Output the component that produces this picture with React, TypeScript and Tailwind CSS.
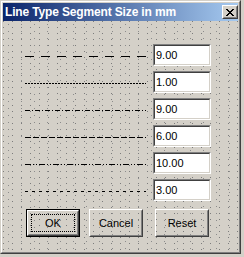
const DOTS =
  'bg-[radial-gradient(circle_at_0.5px_0.5px,#7c7c7c_0.6px,transparent_0.9px),radial-gradient(circle_at_0.5px_0.5px,#8c8c8c_0.6px,transparent_0.9px)] bg-[length:9px_6px,13px_7px] bg-[position:0_0,5px_3px]'

const rows = [
  { dash: '9 7', value: '9.00' },
  { dash: '2 1', value: '1.00' },
  { dash: '5 2 1 2', value: '9.00' },
  { dash: '6 2', value: '6.00' },
  { dash: '6 2 1 2 1 2', value: '10.00' },
  { dash: '3 4', value: '3.00' },
]

const CloseGlyph = () => {
  const px = [
    [0, 0], [1, 0], [6, 0], [7, 0],
    [1, 1], [2, 1], [5, 1], [6, 1],
    [2, 2], [3, 2], [4, 2], [5, 2],
    [3, 3], [4, 3],
    [2, 4], [3, 4], [4, 4], [5, 4],
    [1, 5], [2, 5], [5, 5], [6, 5],
    [0, 6], [1, 6], [6, 6], [7, 6],
  ]
  return (
    <svg width="8" height="7" viewBox="0 0 8 7" shapeRendering="crispEdges">
      {px.map(([x, y]) => (
        <rect key={`${x}-${y}`} x={x} y={y} width="1" height="1" fill="#000" />
      ))}
    </svg>
  )
}

const Field = ({ value }: { value: string }) => (
  <div className="w-[58px] h-[22px] border border-t-[#808080] border-l-[#808080] border-b-white border-r-white">
    <div className="h-full flex items-center pl-px bg-white border border-t-[#404040] border-l-[#404040] border-b-[#d4d0c8] border-r-[#d4d0c8] text-[11px] text-black">
      {value}
    </div>
  </div>
)

const Button = ({ label, isDefault, className }: { label: string; isDefault?: boolean; className?: string }) => (
  <div className={`w-[54px] h-[28px] ${isDefault ? 'border border-black' : ''} ${className ?? ''}`}>
    <div className="h-full border border-t-white border-l-white border-b-[#404040] border-r-[#404040]">
      <div className="h-full border border-t-transparent border-l-transparent border-b-[#808080] border-r-[#808080] flex items-center justify-center p-[2px]">
        <div
          className={`w-full h-full flex items-center justify-center text-[11px] text-black ${
            isDefault ? 'outline outline-1 outline-dotted outline-black -outline-offset-1' : ''
          }`}
        >
          {label}
        </div>
      </div>
    </div>
  </div>
)

export default function App() {
  return (
    <div className="w-[244px] h-[257px] bg-[#d4d0c8] font-['Liberation_Sans',Arial,sans-serif]">
      <div className="w-[241px] h-[254px] border border-t-[#d4d0c8] border-l-[#d4d0c8] border-b-[#404040] border-r-[#404040]">
        <div className="h-full flex flex-col p-px border border-t-white border-l-white border-b-[#808080] border-r-[#808080]">
          <div className="h-[18px] flex items-center justify-between pl-[2px] bg-[linear-gradient(to_right,#0a246a,#a6caf0)]">
            <span className="text-white font-bold text-[12px] tracking-[-0.15px] leading-none">
              Line Type Segment Size in mm
            </span>
            <div className="w-[16px] h-[14px] border border-t-white border-l-white border-b-[#404040] border-r-[#404040] bg-[#d4d0c8]">
              <div className="h-full flex items-center justify-center border border-t-transparent border-l-transparent border-b-[#808080] border-r-[#808080]">
                <CloseGlyph />
              </div>
            </div>
          </div>

          <div className={`flex-1 flex flex-col pt-[23px] ${DOTS}`}>
            <div className="flex flex-col gap-[5px] pl-[22px]">
              {rows.map((r, i) => (
                <div key={i} className="flex items-center gap-[7px]">
                  <svg width="121" height="22" shapeRendering="crispEdges">
                    <line x1="0" y1="12.5" x2="121" y2="12.5" stroke="#000" strokeWidth="1" strokeDasharray={r.dash} />
                  </svg>
                  <Field value={r.value} />
                </div>
              ))}
            </div>
            <div className="flex mt-[8px] pl-[23px]">
              <Button label="OK" isDefault />
              <Button label="Cancel" className="ml-[9px]" />
              <Button label="Reset" className="ml-[12px]" />
            </div>
          </div>
        </div>
      </div>
    </div>
  )
}
